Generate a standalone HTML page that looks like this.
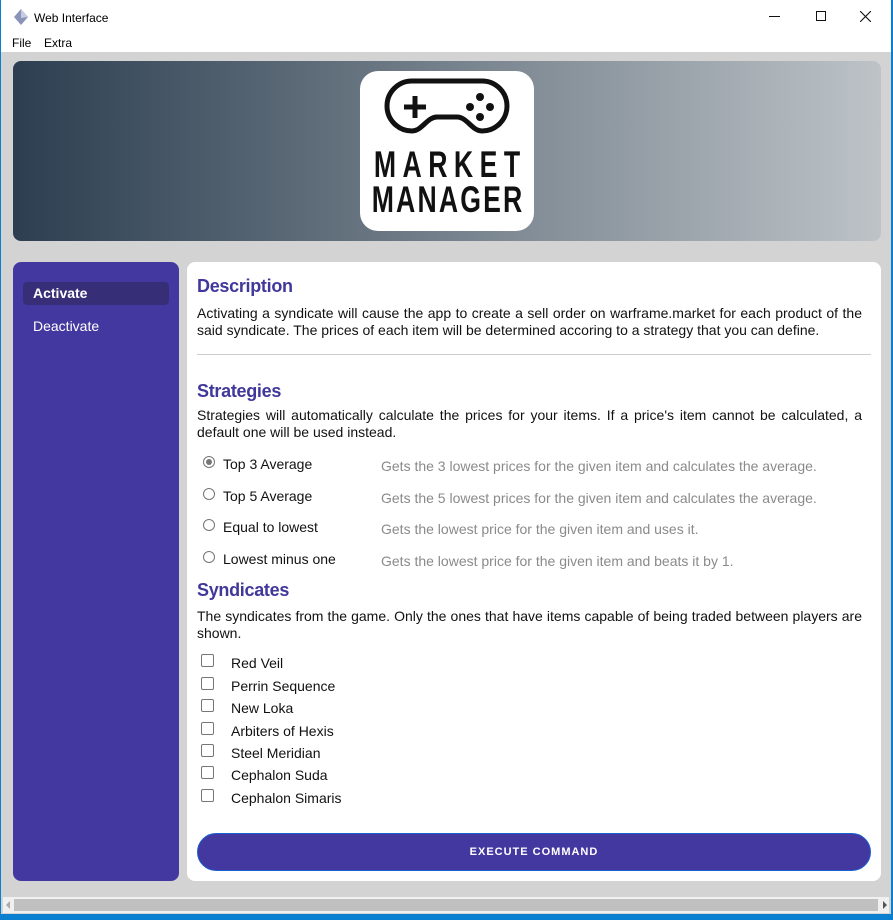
<!DOCTYPE html><html><head><style>
*{margin:0;padding:0;box-sizing:border-box}
body{width:893px;height:920px;background:#0a7fd0;font-family:"Liberation Sans",Arial,sans-serif;position:relative;overflow:hidden}
.win{position:absolute;left:1px;top:0;width:890px;height:914px;background:#d3d3d3}
.title{position:absolute;left:0;top:0;width:890px;height:33px;background:#fff;font-size:12px}
.menu{position:absolute;left:0;top:33px;width:890px;height:19px;background:#fff;font-size:12px}
.banner{position:absolute;left:12px;top:61px;width:868px;height:180px;border-radius:8px;background:linear-gradient(90deg,#2c3e50,#bdc3c7)}
.logo{position:absolute;left:347px;top:10px;width:174px;height:160px;background:#fff;border-radius:18px;text-align:center}
.logo .t{position:absolute;left:-63px;width:300px;text-align:center;font-family:"Liberation Sans",sans-serif;font-weight:bold;font-size:37px;color:#111;line-height:37px;transform:scaleX(.72);transform-origin:center}
.side{position:absolute;left:12px;top:262px;width:166px;height:619px;background:#4338a0;border-radius:8px;color:#fff;font-size:14px}
.act{position:absolute;left:10px;top:20px;width:146px;height:23px;background:#362f78;border-radius:4px;font-weight:bold;padding:3px 10px}
.main{position:absolute;left:186px;top:262px;width:694px;height:619px;background:#fff;border-radius:8px;color:#111;font-size:14px}
h2{position:absolute;left:10px;color:#40389a;font-size:18px;letter-spacing:-.3px}
p{position:absolute;left:10px;width:665px;line-height:17px;text-align:justify}
.r{position:absolute;left:16px;width:12px;height:12px;border:1px solid #767676;border-radius:50%}
.rl{position:absolute;left:36px}
.rd{position:absolute;left:194px;color:#8a8a8a}
.c{position:absolute;left:14px;width:13px;height:13px;border:1px solid #767676;border-radius:2px}
.cl{position:absolute;left:44px}
.btn{position:absolute;left:10px;top:571px;width:674px;height:38px;border-radius:19px;background:#4338a0;border:1px solid #1a5fd0;color:#fff;font-size:11px;font-weight:bold;letter-spacing:1px;text-align:center;line-height:36px}
</style></head><body>
<div class="win">
<div class="title"><svg style="position:absolute;left:13px;top:9px" width="14" height="16"><polygon points="7,0 14,8 7,16 0,8" fill="#8a93b8"/><polygon points="7,0 14,8 7,9" fill="#c5cbe0"/></svg><span style="position:absolute;left:33px;top:11px">Web Interface</span>
<span style="position:absolute;left:768px;top:16px;width:11px;height:1px;background:#111"></span>
<span style="position:absolute;left:815px;top:11px;width:10px;height:10px;border:1px solid #111"></span>
<svg style="position:absolute;left:859px;top:11px" width="11" height="11"><path d="M0 0L11 11M11 0L0 11" stroke="#111" stroke-width="1.1"/></svg></div>
<div class="menu"><span style="position:absolute;left:11px;top:3px">File</span><span style="position:absolute;left:43px;top:3px">Extra</span></div>
<div class="banner"><div class="logo">
<svg style="position:absolute;left:22px;top:6px" width="130" height="64" viewBox="0 0 130 64"><path d="M30 4 H100 A25 25 0 0 1 100 54 C90 54 85 40 75 40 H55 C45 40 40 54 30 54 A25 25 0 0 1 30 4Z" fill="none" stroke="#111" stroke-width="5"/><path d="M22 30 H44 M33 19 V41" stroke="#111" stroke-width="5"/><circle cx="98" cy="20" r="4" fill="#111"/><circle cx="98" cy="40" r="4" fill="#111"/><circle cx="88" cy="30" r="4" fill="#111"/><circle cx="108" cy="30" r="4" fill="#111"/></svg>
<div class="t" style="top:75px;letter-spacing:9px;text-indent:9px">MARKET</div><div class="t" style="top:110px;letter-spacing:3px;text-indent:3px">MANAGER</div></div></div>
<div class="side"><div class="act">Activate</div><div style="position:absolute;left:20px;top:56px">Deactivate</div></div>
<div class="main">
<h2 style="top:14px">Description</h2>
<p style="top:43px">Activating a syndicate will cause the app to create a sell order on warframe.market for each product of the said syndicate. The prices of each item will be determined accoring to a strategy that you can define.</p>
<div style="position:absolute;left:10px;top:92px;width:674px;height:1px;background:#ccc"></div>
<h2 style="top:119px">Strategies</h2>
<p style="top:145px">Strategies will automatically calculate the prices for your items. If a price's item cannot be calculated, a default one will be used instead.</p>
<div class="r" style="top:194px"><div style="margin:2px;width:6px;height:6px;border-radius:50%;background:#767676"></div></div><span class="rl" style="top:194px">Top 3 Average</span><span class="rd" style="top:196px">Gets the 3 lowest prices for the given item and calculates the average.</span>
<div class="r" style="top:226px"></div><span class="rl" style="top:226px">Top 5 Average</span><span class="rd" style="top:228px">Gets the 5 lowest prices for the given item and calculates the average.</span>
<div class="r" style="top:257px"></div><span class="rl" style="top:257px">Equal to lowest</span><span class="rd" style="top:259px">Gets the lowest price for the given item and uses it.</span>
<div class="r" style="top:289px"></div><span class="rl" style="top:289px">Lowest minus one</span><span class="rd" style="top:291px">Gets the lowest price for the given item and beats it by 1.</span>
<h2 style="top:318px">Syndicates</h2>
<p style="top:346px">The syndicates from the game. Only the ones that have items capable of being traded between players are shown.</p>
<div class="c" style="top:392px"></div><span class="cl" style="top:393px">Red Veil</span>
<div class="c" style="top:415px"></div><span class="cl" style="top:416px">Perrin Sequence</span>
<div class="c" style="top:437px"></div><span class="cl" style="top:438px">New Loka</span>
<div class="c" style="top:460px"></div><span class="cl" style="top:461px">Arbiters of Hexis</span>
<div class="c" style="top:482px"></div><span class="cl" style="top:483px">Steel Meridian</span>
<div class="c" style="top:504px"></div><span class="cl" style="top:505px">Cephalon Suda</span>
<div class="c" style="top:527px"></div><span class="cl" style="top:528px">Cephalon Simaris</span>
<div class="btn">EXECUTE COMMAND</div>
</div>
<div style="position:absolute;left:2px;top:897px;width:886px;height:16px;background:#f0f0f0"><span style="position:absolute;left:3px;top:4px;border:4px solid transparent;border-right-color:#aaa;border-left:0"></span><div style="position:absolute;left:11px;top:2px;width:864px;height:12px;background:#c0c0c0"></div><span style="position:absolute;left:880px;top:4px;border:4px solid transparent;border-left-color:#555;border-right:0"></span></div>
</div>
</body></html>
